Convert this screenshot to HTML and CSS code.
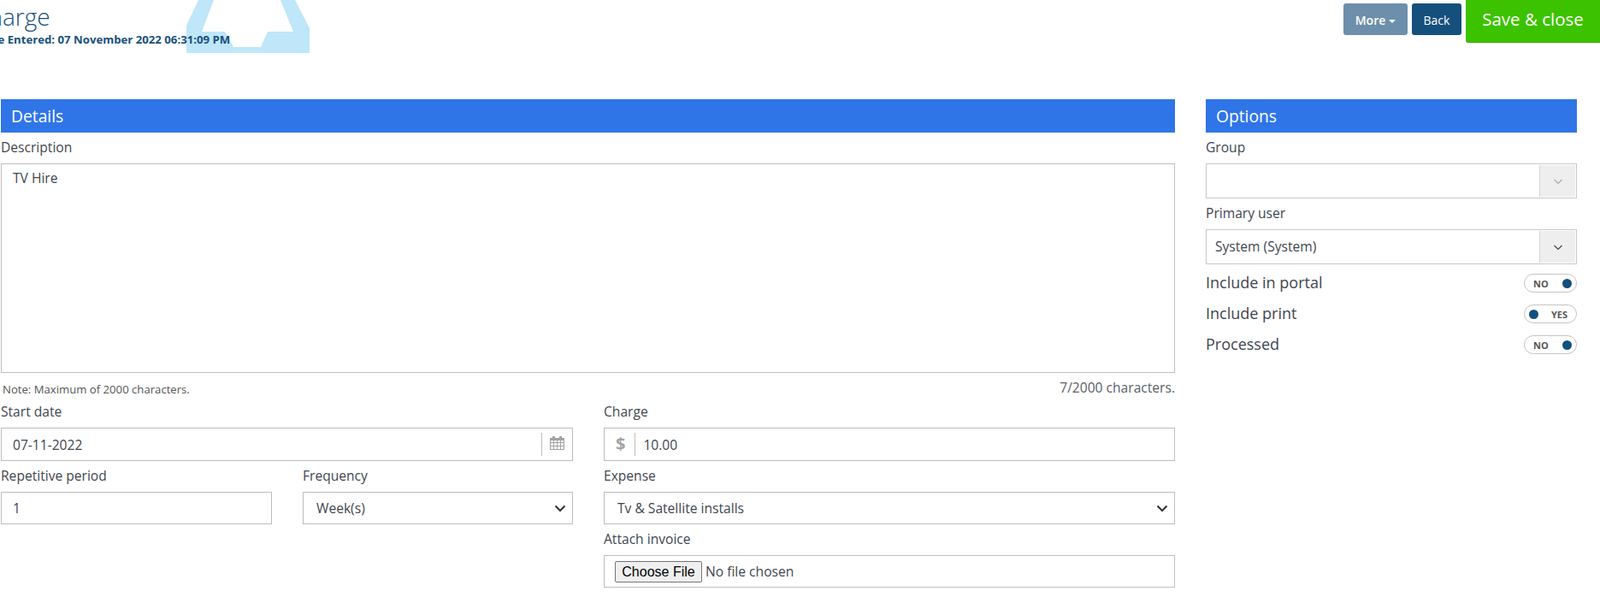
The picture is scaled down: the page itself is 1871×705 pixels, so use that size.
FILE: index.html
```html
<!DOCTYPE html>
<html lang="en">
<head>
<meta charset="utf-8">
<title>Charge</title>
<link rel="stylesheet" href="styles.css">
</head>
<body>
<svg class="logo" width="144" height="62" viewBox="0 0 144 62"><path fill="#bfe6f9" fill-rule="evenodd" d="M0 30L14 0H127L144 33V62H0ZM32 0L18 37H45L55 55H87L95 37H125L110 0Z"/></svg>
<header class="top">
  <div class="title-block">
    <h1 class="title">Charge</h1>
    <div class="entered">Date Entered: 07 November 2022 06:31:09 PM</div>
  </div>
  <div class="actions">
    <button class="btn btn-more">More<span class="caret"></span></button>
    <button class="btn btn-back">Back</button>
    <button class="btn-save">Save &amp; close</button>
  </div>
</header>
<main class="layout">
  <section class="details">
    <h2 class="panel-head">Details</h2>
    <label class="lbl lbl-next">Description</label>
    <textarea class="field area">TV Hire</textarea>
    <div class="notes"><span class="note">Note: Maximum of 2000 characters.</span><span class="count">7/2000 characters.</span></div>
    <div class="form-cols">
      <div class="col">
        <label class="lbl lbl-top">Start date</label>
        <div class="field box"><span class="val">07-11-2022</span><span class="addon addon-r">
          <svg class="cal" width="17" height="16" viewBox="0 0 17 16"><path fill="#a3a3a3" fill-rule="evenodd" d="M0 2h3V0h3v2h5V0h3v2h3v14H0ZM1 5v2h3V5ZM5 5v2h3V5ZM9 5v2h3V5ZM13 5v2h3V5ZM1 8v3h3V8ZM5 8v3h3V8ZM9 8v3h3V8ZM13 8v3h3V8ZM1 12v3h3v-3ZM5 12v3h3v-3ZM9 12v3h3v-3ZM13 12v3h3v-3Z"/></svg></span></div>
        <div class="pair">
          <div>
            <label class="lbl lbl-next">Repetitive period</label>
            <div class="field box box-sm"><span class="val">1</span></div>
          </div>
          <div>
            <label class="lbl lbl-next">Frequency</label>
            <div class="field box box-sm box-sel"><span class="val">Week(s)</span>
              <svg class="chev" width="14" height="14" viewBox="0 0 14 14"><path fill="none" stroke="#333" stroke-width="2" d="M1.500 4.500l5.500 5.500 5.500-5.500"/></svg></div>
          </div>
        </div>
      </div>
      <div class="col">
        <label class="lbl lbl-top">Charge</label>
        <div class="field box"><span class="addon addon-l">$</span><span class="val">10.00</span></div>
        <label class="lbl lbl-next">Expense</label>
        <div class="field box box-sm box-sel"><span class="val">Tv &amp; Satellite installs</span>
          <svg class="chev" width="14" height="14" viewBox="0 0 14 14"><path fill="none" stroke="#333" stroke-width="2" d="M1.500 4.500l5.500 5.500 5.500-5.500"/></svg></div>
        <label class="lbl lbl-next">Attach invoice</label>
        <div class="field box box-sm box-file"><span class="file-btn">Choose File</span><span class="file-txt">No file chosen</span></div>
      </div>
    </div>
  </section>
  <aside class="options">
    <h2 class="panel-head">Options</h2>
    <label class="lbl lbl-next">Group</label>
    <div class="combo"><span class="combo-val"></span><span class="combo-btn"><svg width="12" height="12" viewBox="0 0 12 12"><path fill="none" stroke="#aaa" stroke-width="1.200" d="M1.500 4l4.500 4.500L10.500 4"/></svg></span></div>
    <label class="lbl lbl-next">Primary user</label>
    <div class="combo"><span class="combo-val">System (System)</span><span class="combo-btn"><svg width="12" height="12" viewBox="0 0 12 12"><path fill="none" stroke="#444" stroke-width="1.200" d="M1.500 4l4.500 4.500L10.500 4"/></svg></span></div>
    <div class="toggles">
      <div class="toggle-row"><span class="toggle-lbl">Include in portal</span><span class="toggle"><b>NO</b><i class="dot"></i></span></div>
      <div class="toggle-row"><span class="toggle-lbl">Include print</span><span class="toggle toggle-on"><i class="dot"></i><b>YES</b></span></div>
      <div class="toggle-row"><span class="toggle-lbl">Processed</span><span class="toggle"><b>NO</b><i class="dot"></i></span></div>
    </div>
  </aside>
</main>
</body>
</html>
```

FILE: styles.css
```css
* { box-sizing: border-box; }
html, body { height: 705px; overflow: hidden; }
body {
  margin: 0;
  background: #fff;
  color: #3f4650;
  font-family: "Open Sans", "Liberation Sans", sans-serif;
  font-size: 15.6px;
}
.logo { position: absolute; left: 218px; top: 0; }
.top {
  position: relative;
  display: flex;
  justify-content: space-between;
  align-items: flex-start;
  height: 116px;
}
.title-block { margin-left: -26px; }
.title {
  margin: 1px 0 0 -5px;
  font-size: 28px;
  font-weight: 300;
  line-height: 36px;
  color: #174f7c;
}
.entered {
  font-size: 13.2px;
  font-weight: 700;
  line-height: 18px;
  margin-top: 0;
  color: #174f7c;
}
.actions { display: flex; align-items: flex-start; }
.btn {
  height: 37px;
  margin-top: 4px;
  margin-right: 5px;
  padding: 2px 0 0;
  border: 0;
  border-radius: 3px;
  color: #fff;
  font-family: inherit;
  font-size: 14px;
  font-weight: 600;
}
.btn-more { width: 75px; background: #6d8fab; }
.btn-back { width: 58px; background: #154f7c; font-weight: 500; }
.caret {
  display: inline-block;
  margin-left: 4px;
  vertical-align: 2px;
  border-top: 4.500px solid #fff;
  border-left: 4.500px solid transparent;
  border-right: 4.500px solid transparent;
}
.btn-save {
  width: 157px;
  height: 50px;
  padding: 0 0 6px;
  border: 0;
  border-bottom: 1px solid #36a800;
  border-radius: 0 0 0 3px;
  background: #3dc200;
  color: #fff;
  font-family: inherit;
  font-size: 20.500px;
  font-weight: 400;
}
.layout {
  display: grid;
  grid-template-columns: 1373px 434px;
  column-gap: 36px;
  padding-left: 1px;
}
.panel-head {
  margin: 0;
  height: 39px;
  padding-left: 12px;
  background: #2f75e8;
  color: #fff;
  font-size: 19.250px;
  font-weight: 400;
  line-height: 39px;
}
.lbl {
  display: block;
  height: 19px;
  margin-bottom: 9px;
  line-height: 19px;
  color: #3f4650;
}
.lbl-next { margin-top: 8px; }
.lbl-top { margin-top: 0; }
.field { border: 1px solid #bdbdbd; background: #fff; color: #3f4650; font-family: inherit; font-size: 15.6px; }
.area {
  display: block;
  width: 100%;
  height: 245px;
  padding: 5px 13px;
  resize: none;
  outline: 0;
}
.notes {
  display: flex;
  justify-content: space-between;
  align-items: center;
  height: 36px;
  padding-left: 2px;
}
.note { padding-top: 1px; font-size: 13.150px; color: #555; }
.count { padding-bottom: 2px; font-size: 15.6px; color: #5a5f66; }
.form-cols {
  display: grid;
  grid-template-columns: 669px 668px;
  column-gap: 36px;
}
.box {
  display: flex;
  align-items: center;
  justify-content: space-between;
  height: 39px;
  padding-left: 13px;
}
.box-sm { height: 38px; }
.box-sel { padding-left: 15px; padding-right: 7px; }
.addon { display: flex; align-items: center; height: 27px; }
.addon-r { border-left: 1px solid #bdbdbd; padding: 0 9px 0 9px; }
.cal { margin-top: -3px; }
.addon-l {
  padding-right: 11px;
  margin-right: 9px;
  padding-bottom: 3px;
  border-right: 1px solid #bdbdbd;
  color: #a3a3a3;
  font-size: 20px;
  font-weight: 700;
}
.box .addon-l + .val { flex: 1; }
.pair {
  display: grid;
  grid-template-columns: 317px 316px;
  column-gap: 36px;
}
.box-file { justify-content: flex-start; padding-left: 12px; }
.file-btn {
  display: inline-block;
  width: 102px;
  height: 25px;
  border: 1px solid #767676;
  border-radius: 2px;
  background: #efefef;
  color: #000;
  font-family: "Liberation Sans", Arial, sans-serif;
  font-size: 16px;
  line-height: 23px;
  text-align: center;
}
.file-txt { margin-left: 4px; }
.combo {
  display: flex;
  height: 41px;
  border: 1px solid #c9c9c9;
}
.combo-val { flex: 1; padding-left: 10px; line-height: 39px; }
.combo-btn {
  display: flex;
  align-items: center;
  justify-content: center;
  width: 42px;
  margin: 1px;
  border-left: 1px solid #d4d4d4;
  background: #eee;
}
.toggles { margin-top: 4px; }
.toggle-row {
  display: flex;
  justify-content: space-between;
  align-items: center;
  height: 36px;
  font-size: 18px;
}
.toggle-lbl { margin-top: -2px; }
.toggle {
  display: flex;
  align-items: center;
  justify-content: space-between;
  width: 62px;
  height: 22px;
  padding: 0 5px 0 10px;
  border: 1px solid #c4c4c4;
  border-radius: 11px;
}
.toggle-on { padding: 0 10px 0 5px; }
.toggle b { font-size: 11px; font-weight: 700; color: #555; }
.dot { width: 11px; height: 11px; border-radius: 50%; background: #154f7c; }
```
